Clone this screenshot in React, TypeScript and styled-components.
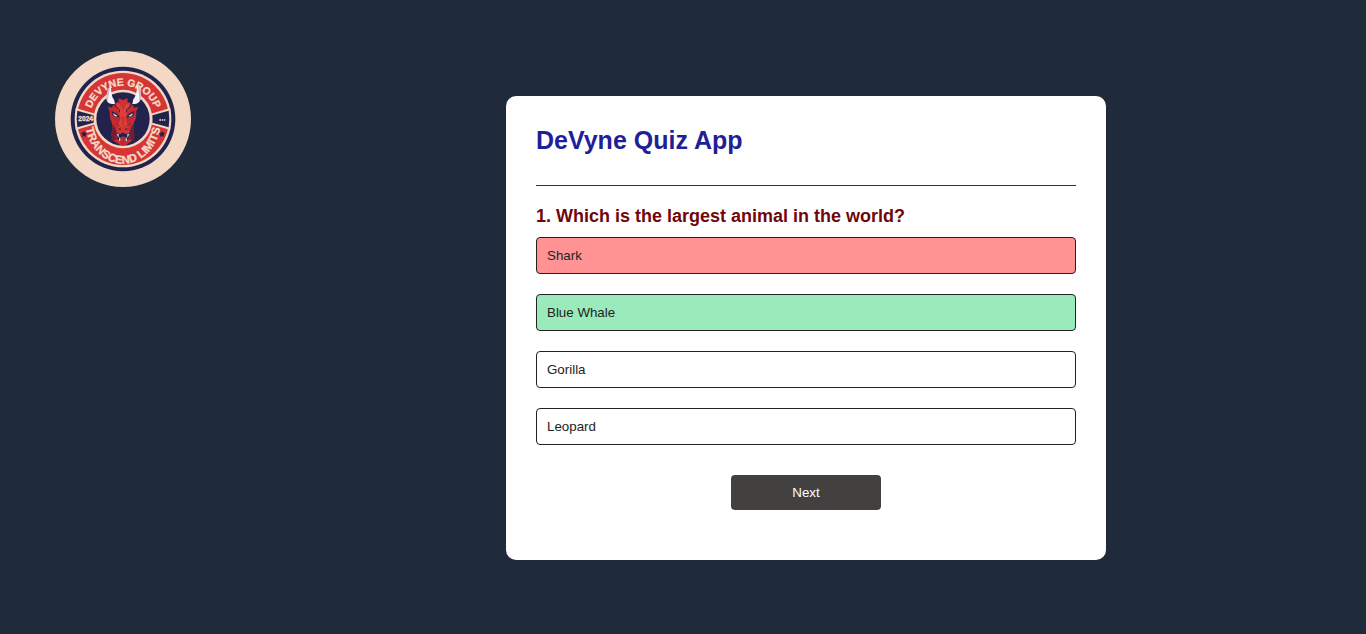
import React, { useState } from "react";
import styled, { createGlobalStyle } from "styled-components";

const GlobalStyle = createGlobalStyle`
  *, *::before, *::after { box-sizing: border-box; }
  body {
    margin: 0;
    background: #1f2b3a;
    color: #222222;
    font-family: "Liberation Sans", Arial, sans-serif;
  }
`;

const Page = styled.div`
  display: flex;
  align-items: flex-start;
  min-height: 100vh;
`;

const Brand = styled.header`
  flex: none;
  padding: 51px 55px;
`;

const Logo = styled.svg`
  display: block;
  width: 136px;
  height: 136px;
`;

const LogoText = styled.text<{ $size: number }>`
  fill: #f5d9c6;
  stroke: #f5d9c6;
  stroke-width: 1px;
  font-family: "Liberation Sans", Arial, sans-serif;
  font-weight: 700;
  font-size: ${(p) => p.$size}px;
`;

const Main = styled.main`
  flex: 1;
  display: flex;
  justify-content: center;
  padding: 96px 0 74px;
`;

const Card = styled.section`
  width: 90%;
  max-width: 600px;
  padding: 30px 30px 50px;
  background: #ffffff;
  border-radius: 10px;
`;

const Title = styled.h1`
  margin: 0;
  padding-bottom: 30px;
  border-bottom: 1px solid #333333;
  color: #211f98;
  font-size: 25px;
  line-height: 29px;
`;

const Quiz = styled.div`
  padding: 19px 0 0;
`;

const Question = styled.h2`
  margin: 0;
  color: #700609;
  font-size: 18px;
  line-height: 22px;
`;

const Options = styled.div`
  display: flex;
  flex-direction: column;
  gap: 20px;
  margin: 10px 0 30px;
`;

type Mark = "wrong" | "right" | "plain";
const fills: Record<Mark, string> = {
  wrong: "#ff9393",
  right: "#9aeabc",
  plain: "#ffffff",
};

const Option = styled.button<{ $mark: Mark }>`
  width: 100%;
  padding: 10px;
  border: 1px solid #222222;
  border-radius: 4px;
  background: ${(p) => fills[p.$mark]};
  color: #222222;
  font-family: inherit;
  line-height: 15px;
  text-align: left;
`;

const NextButton = styled.button`
  display: block;
  width: 150px;
  margin: 0 auto;
  padding: 10px;
  border: 0;
  border-radius: 4px;
  background: #434140;
  color: #ffffff;
  font-family: inherit;
  font-weight: 500;
  line-height: 15px;
  cursor: pointer;
`;

const CREAM = "#f3d8c6";
const NAVY = "#21234d";
const RED = "#d53635";

function DragonLogo() {
  return (
    <Logo viewBox="-204 -204 408 408" role="img" aria-label="DeVyne Group">
      <defs>
        <path id="arc-top" d="M-100 0A100 100 0 0 1 100 0" />
        <path id="arc-bottom" d="M-114 0A114 134 0 0 0 114 0" />
      </defs>
      <circle r="204" fill={CREAM} />
      <circle r="157" fill={NAVY} />
      <circle r="145" fill={CREAM} />
      <circle r="138" fill={RED} />
      <path d="M-142 -33L-84 -16V16L-142 33ZM142 -33L84 -16V16L142 33Z" fill={CREAM} />
      <path d="M-137 -25L-88 -11V11L-137 25Q-141 0 -137 -25ZM137 -25L88 -11V11L137 25Q141 0 137 -25Z" fill={NAVY} />
      <circle r="88" fill={CREAM} />
      <circle r="80" fill={NAVY} />
      <LogoText $size={31} textAnchor="middle">
        <textPath href="#arc-top" startOffset="50%">DEVYNE GROUP</textPath>
      </LogoText>
      <LogoText $size={34} textAnchor="middle">
        <textPath href="#arc-bottom" startOffset="50%">TRANSCEND LIMITS</textPath>
      </LogoText>
      <LogoText $size={20} x={-112} y={7} textAnchor="middle">2024</LogoText>
      <path d="M109 1h5v4h-5zM116 1h5v4h-5zM123 1h4v4h-4z" fill={CREAM} />
      <path
        d="M-117 35l3 6 7 1-5 5 1 7-6-3-6 3 1-7-5-5 7-1zM117 35l3 6 7 1-5 5 1 7-6-3-6 3 1-7-5-5 7-1z"
        fill={NAVY}
      />
      <path
        d="M-13 -62L0 -56L13 -63L14 -51L25 -47L34 -34L46 -36L40 -23L39 -4L32 13L31 29L34 48L26 66L9 78H-9L-27 66L-35 48L-31 29L-33 13L-39 -4L-40 -23L-46 -36L-34 -34L-25 -47L-14 -51Z"
        fill="#c62c30"
      />
      <path d="M-30 14L-35 66L-20 62L-20 37ZM30 14L35 66L20 62L20 37Z" fill="#6d1e39" />
      <path d="M-21 -49L-8 -44L0 -26L8 -44L21 -49L17 -30L9 -12L13 17L0 28L-13 17L-9 -12L-17 -30Z" fill="#dc4038" />
      <path d="M-12 -61L0 -56L12 -61L7 -42L0 -31L-7 -42Z" fill="#cd3431" />
      <path d="M-36 -26L-20 -18L-8 -5L-12 13L-25 4L-37 -10ZM36 -26L20 -18L8 -5L12 13L25 4L37 -10Z" fill="#b82a33" />
      <path d="M-34 -24L-18 -16L-10 -5L-22 -6L-31 -12ZM34 -24L18 -16L10 -5L22 -6L31 -12Z" fill={NAVY} />
      <path d="M-29 -17L-17 -10L-21 -7L-28 -12ZM29 -17L17 -10L21 -7L28 -12Z" fill="#d3e3ef" />
      <path d="M-24 -49Q-26 -37 -15 -32Q-9 -28 -11 -20M24 -49Q26 -37 15 -32Q9 -28 11 -20" fill="none" stroke={NAVY} strokeWidth="3" />
      <path d="M-5 -6L0 -10L5 -6L4 17L0 23L-4 17Z" fill="#cd3431" />
      <path d="M-24 11L-13 21L-18 34M24 11L13 21L18 34" fill="none" stroke="#8e2136" strokeWidth="3" />
      <path d="M-15 20Q0 32 15 20L19 38L9 44L0 38L-9 44L-19 38Z" fill="#d23835" />
      <path d="M-13 27L-5 30L-8 34L-13 32ZM13 27L5 30L8 34L13 32Z" fill="#6d1e39" />
      <path d="M-20 42L-9 46L0 41L9 46L20 42L17 61L10 65L6 53H-6L-10 65L-17 61Z" fill={NAVY} />
      <path d="M-18 44L-13 46L-14 57ZM18 44L13 46L14 57ZM-12 65L-10 53L-6 66ZM12 65L10 53L6 66Z" fill="#ffffff" />
      <path d="M-6 57H6L9 67L5 74H-5L-9 67Z" fill="#bc2933" />
      <path
        d="M-37 -104C-48 -84 -54 -62 -46 -50Q-38 -42 -24 -46L-27 -58C-35 -67 -35 -82 -37 -104ZM43 -108C55 -85 57 -62 49 -52Q41 -43 28 -46L31 -59C40 -70 42 -86 43 -108Z"
        fill="#f7f5f8"
      />
      <path d="M-37 -104C-48 -84 -54 -62 -46 -50C-45 -64 -41 -80 -37 -104ZM43 -108C55 -85 57 -62 49 -52C50 -64 47 -82 43 -108Z" fill="#cbbcc5" />
    </Logo>
  );
}

const answers = [
  { text: "Shark", correct: false },
  { text: "Blue Whale", correct: true },
  { text: "Gorilla", correct: false },
  { text: "Leopard", correct: false },
];

export default function App() {
  const [chosen, setChosen] = useState<number | null>(0);
  const markOf = (index: number): Mark => {
    if (chosen === null) return "plain";
    if (answers[index].correct) return "right";
    return index === chosen ? "wrong" : "plain";
  };

  return (
    <>
      <GlobalStyle />
      <Page>
        <Brand>
          <DragonLogo />
        </Brand>
        <Main>
          <Card>
            <Title>DeVyne Quiz App</Title>
            <Quiz>
              <Question>1. Which is the largest animal in the world?</Question>
              <Options>
                {answers.map((answer, index) => (
                  <Option
                    key={answer.text}
                    type="button"
                    $mark={markOf(index)}
                    disabled={chosen !== null}
                    onClick={() => setChosen(index)}
                  >
                    {answer.text}
                  </Option>
                ))}
              </Options>
              <NextButton type="button" onClick={() => setChosen(null)}>
                Next
              </NextButton>
            </Quiz>
          </Card>
        </Main>
      </Page>
    </>
  );
}
